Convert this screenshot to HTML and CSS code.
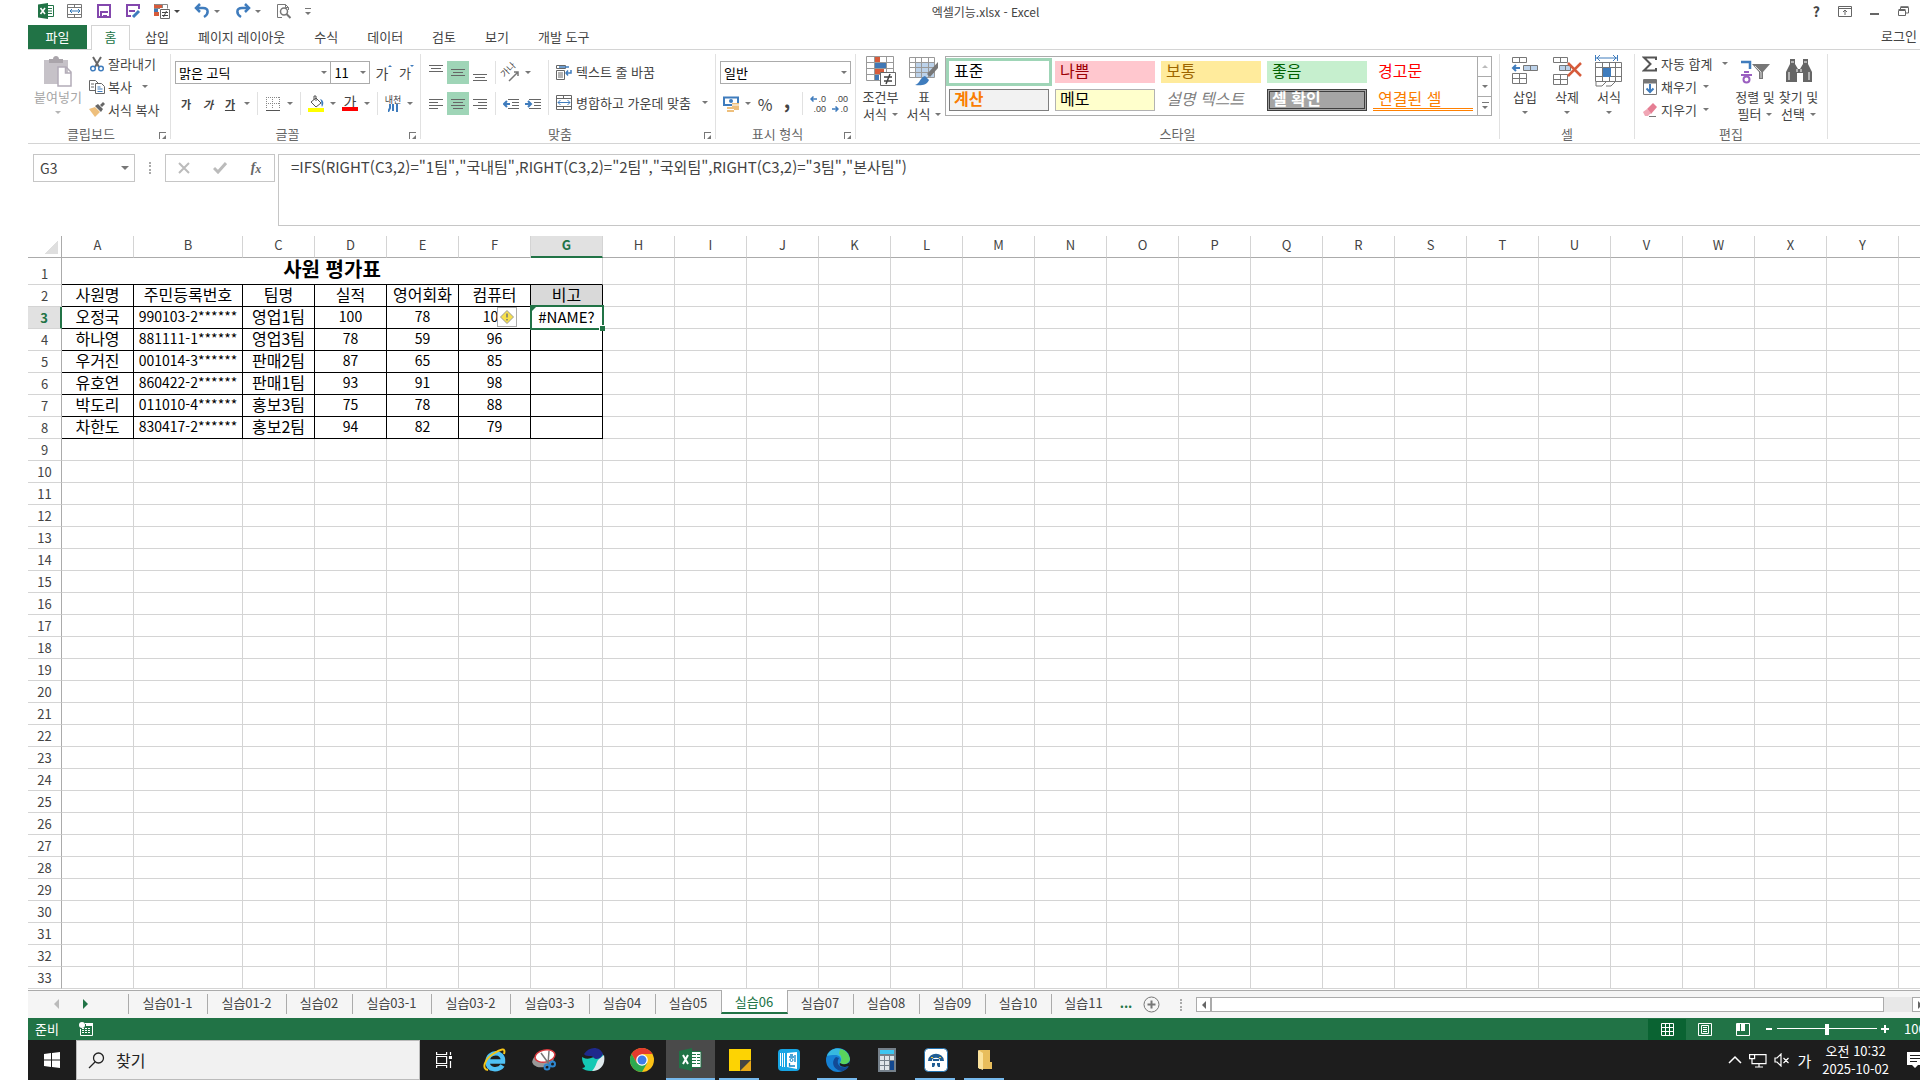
FILE: index.html
```html
<!doctype html>
<html lang="ko">
<head>
	<meta charset="utf-8">
	<meta name="viewport" content="width=device-width, initial-scale=1.0">
	<title>엑셀기능.xlsx - Excel</title>
	<link rel="stylesheet" href="styles.css">
</head>
<body>

<div class="app">

	<header class="titlebar">
		<div class="qat">
			<button class="q1" aria-label="Excel"><svg width="16" height="16" viewBox="0 0 16 16"><path fill="#fff" stroke="#217346" d="M8 2.500h7.500v11H8z"/><path stroke="#217346" d="M10 5.500h4M10 8h4M10 10.500h4"/><path fill="#217346" d="M0 1.500 10 0v16L0 14.500z"/><path stroke="#fff" stroke-width="1.600" d="m2.500 5 4.500 6M7 5l-4.500 6"/></svg></button>
			<button class="q1" aria-label="병합"><svg width="16" height="16" viewBox="0 0 16 16" fill="none" stroke="#777"><path d="M.500 1.500h14v13H.500zM.500 4.500h14M.500 11.500h14M7.500 1.500v3M7.500 11.500v3"/><path stroke="#2e75b6" d="M3 8h10M5 6 3 8l2 2M11 6l2 2-2 2"/></svg></button>
			<button class="q1" aria-label="저장"><svg width="16" height="16" viewBox="0 0 16 16" fill="none" stroke="#8347ad" stroke-width="2"><path d="M2 2h12v12H2z"/><path d="M4 9h8M5 14v-4M7 13h4"/></svg></button>
			<button class="q1" aria-label="다른 이름으로 저장"><svg width="16" height="16" viewBox="0 0 16 16" fill="none" stroke="#8347ad" stroke-width="2"><path d="M14 6V2H2v11h4M4 8h6"/><path stroke="#3f7cbd" stroke-width="3" d="m8 14 6-6"/></svg></button>
			<button class="q2" aria-label="조건부 서식"><svg width="16" height="16" viewBox="0 0 16 16"><path fill="#d65b3b" d="M0 1h8v4H0zM0 9h5v4H0z"/><path fill="#4178b5" d="M0 5h4v4H0z"/><path fill="none" stroke="#888" d="M.5 1.500h13v4M8.500 1v4M0 5.500h6"/><path fill="#fff" stroke="#666" d="M6.500 6.500h9v9h-9z"/><path stroke="#444" d="M8 9.500h6M8 12.500h6M12.500 8l-3 6"/></svg><i class="caret dark"></i></button>
			<button class="q3" aria-label="실행 취소"><svg width="16" height="16" viewBox="0 0 16 16" fill="none" stroke="#3f7cbd" stroke-width="2.500"><path d="M2 5h7c6 0 6 6 1 9"/><path d="M6 1 2 5l4 4"/></svg><i class="caret"></i></button>
			<button class="q3" aria-label="다시 실행"><svg width="16" height="16" viewBox="0 0 16 16" fill="none" stroke="#3f7cbd" stroke-width="2.500"><path d="M14 5H7c-6 0-6 6-1 9"/><path d="m10 1 4 4-4 4"/></svg><i class="caret"></i></button>
			<button class="q1" aria-label="미리 보기"><svg width="16" height="16" viewBox="0 0 16 16" fill="none" stroke="#777"><path d="M6 14.500H1.500V1.500h8l3 3V7M9.500 1.500v3h3"/><circle cx="8" cy="8.500" r="3.500" stroke-width="1.500"/><path stroke-width="2" d="m10.500 11 4 4"/></svg></button>
			<button class="more" aria-label="사용자 지정"><i class="caret"></i></button>
		</div>
		<h1>엑셀기능.xlsx - Excel</h1>
		<div class="winctl">
			<button class="help" aria-label="도움말">?</button>
			<button aria-label="리본 표시"><svg width="14" height="11" viewBox="0 0 14 11" fill="none" stroke="#666"><path d="M.5.500h13v10H.5zM.5 2.500h13M7 9V4M5 6l2-2 2 2"/></svg></button>
			<button aria-label="최소화"><svg width="10" height="11" viewBox="0 0 10 11"><path stroke="#666" stroke-width="2" d="M0 8h9"/></svg></button>
			<button aria-label="복원"><svg width="11" height="11" viewBox="0 0 11 11" fill="none" stroke="#666"><path d="M.5 4.500h7v5h-7zM.5 3.500h7M2.500 3V1.500h8V7H8M2.500.700h8"/></svg></button>
		</div>
	</header>

	<nav class="tabs">
		<a href="#" class="file">파일</a>
		<a href="#" class="on">홈</a>
		<a href="#">삽입</a>
		<a href="#">페이지 레이아웃</a>
		<a href="#">수식</a>
		<a href="#">데이터</a>
		<a href="#">검토</a>
		<a href="#">보기</a>
		<a href="#">개발 도구</a>
		<a href="#" class="login">로그인</a>
	</nav>

	<section class="ribbon">

		<div class="group g-clip">
			<div class="body">
				<button class="big off"><span class="pic"><svg width="30" height="32" viewBox="0 0 30 32"><path fill="#c6c2c8" d="M1 5h24v24H1z"/><path fill="#aaa5ab" d="M6 8V4h4c0-4 6-4 6 0h4v4z"/><path fill="#fff" stroke="#b3acb8" stroke-width="1.500" d="M15 12h8l5 5v14H15zM22.500 12v6H28"/></svg></span><span>붙여넣기</span><i class="caret"></i></button>
				<div class="stack">
					<button class="line"><svg width="16" height="16" viewBox="0 0 16 16" fill="none"><path stroke="#666" stroke-width="2" d="m4 1 6 10M12 1 6 11"/><circle cx="4" cy="12.500" r="2.300" stroke="#3f7cbd" stroke-width="1.500"/><circle cx="12" cy="12.500" r="2.300" stroke="#3f7cbd" stroke-width="1.500"/></svg>잘라내기</button>
					<button class="line"><svg width="16" height="16" viewBox="0 0 16 16" fill="#fff" stroke="#666"><path d="M.500 1.500h6l3 3v7h-9zM2 5h3M2 8h3"/><path d="M6.500 4.500h6l3 3v7h-9z"/><path stroke="#3f7cbd" d="M8.500 8h3M8.500 10h5M8.500 12.500h5"/></svg>복사<i class="caret far"></i></button>
					<button class="line"><svg width="16" height="16" viewBox="0 0 16 16"><path fill="#eebf7c" d="m0 7 6-2 5 5-5 5z"/><path fill="#666" d="m6 4 3-2 5 5-2 3zM11 3l3-3 2 2-3 3z"/></svg>서식 복사</button>
				</div>
			</div>
			<div class="cap dlg">클립보드<button class="launch" aria-label="클립보드 옵션"></button></div>
		</div>

		<div class="group g-font">
			<div class="body rows">
				<div class="row">
					<label class="drop font"><select aria-label="글꼴"><option>맑은 고딕</option></select><i class="caret"></i></label>
					<label class="drop size"><select aria-label="크기"><option>11</option></select><i class="caret"></i></label>
					<button class="ic ga up">가<i></i></button>
					<button class="ic ga small">가<i></i></button>
				</div>
				<div class="row">
					<button class="ic ga bold">가</button>
					<button class="ic ga bold it">가</button>
					<button class="ic ga bold un">가</button>
					<button class="cr" aria-label="밑줄"><i class="caret"></i></button>
					<span class="sep"></span>
					<button class="ic" aria-label="테두리"><svg width="14" height="14" viewBox="0 0 14 14" fill="none" stroke="#888"><path stroke-dasharray="1 1" d="M.500 0v12M6.500 0v12M13.500 0v12M0 .500h14M0 6.500h14"/><path stroke="#555" d="M0 13.500h14"/></svg></button>
					<button class="cr" aria-label="테두리 선택"><i class="caret"></i></button>
					<span class="sep"></span>
					<button class="ic" aria-label="채우기 색"><svg width="16" height="17" viewBox="0 0 16 17"><path fill="#fff" stroke="#555" d="m3 7 5-4 5 5-5 4zM6 5V1h2v5"/><path fill="#3f7cbd" d="M12 4c4 1 4 5 2 8-1-3 0-5-2-8z"/><path fill="#ff0" d="M0 13h16v4H0z"/></svg></button>
					<button class="cr" aria-label="채우기 색 선택"><i class="caret"></i></button>
					<button class="ic ga red">가</button>
					<button class="cr" aria-label="글꼴 색 선택"><i class="caret"></i></button>
					<span class="sep"></span>
					<button class="ic ruby"><span>내천</span><svg width="10" height="8" viewBox="0 0 10 8" fill="none" stroke="#3f7cbd" stroke-width="2"><path d="M2 0v4L0 8M5 0v7M9 0v8"/></svg></button>
					<button class="cr" aria-label="윗주"><i class="caret"></i></button>
				</div>
			</div>
			<div class="cap dlg">글꼴<button class="launch" aria-label="글꼴 옵션"></button></div>
		</div>

		<div class="group g-align">
			<div class="body">
				<div class="rows">
					<div class="row">
						<button class="ic" aria-label="위쪽 맞춤"><svg width="14" height="20" viewBox="0 0 14 20" stroke="#666"><path d="M0 2.500h14M2 5.500h10M0 8.500h14"/></svg></button>
						<button class="ic on" aria-label="가운데"><svg width="14" height="20" viewBox="0 0 14 20" stroke="#666"><path d="M0 6.500h14M2 9.500h10M0 12.500h14"/></svg></button>
						<button class="ic" aria-label="아래쪽 맞춤"><svg width="14" height="20" viewBox="0 0 14 20" stroke="#666"><path d="M0 11.500h14M2 14.500h10M0 17.500h14"/></svg></button>
						<span class="sep"></span>
						<button class="ic tilt"><span>가나</span><svg width="20" height="18" viewBox="0 0 20 18" fill="none" stroke="#777" stroke-width="1.500"><path d="m8 17 9-9M13 8h4v4"/></svg></button>
						<button class="cr" aria-label="방향"><i class="caret"></i></button>
					</div>
					<div class="row">
						<button class="ic" aria-label="왼쪽 맞춤"><svg width="14" height="12" viewBox="0 0 14 12" stroke="#666"><path d="M0 1.500h14M0 4.500h9M0 7.500h14M0 10.500h9"/></svg></button>
						<button class="ic on" aria-label="가운데 맞춤"><svg width="14" height="12" viewBox="0 0 14 12" stroke="#666"><path d="M0 1.500h14M2 4.500h10M0 7.500h14M2 10.500h10"/></svg></button>
						<button class="ic" aria-label="오른쪽 맞춤"><svg width="14" height="12" viewBox="0 0 14 12" stroke="#666"><path d="M0 1.500h14M5 4.500h9M0 7.500h14M5 10.500h9"/></svg></button>
						<span class="sep"></span>
						<button class="ic" aria-label="내어쓰기"><svg width="16" height="12" viewBox="0 0 16 12" fill="none" stroke="#666"><path d="M5 1.500h11M9 4.500h7M9 7.500h7M5 10.500h11"/><path stroke="#3f7cbd" stroke-width="2" d="M7 6H1M4 3 1 6l3 3"/></svg></button>
						<button class="ic" aria-label="들여쓰기"><svg width="16" height="12" viewBox="0 0 16 12" fill="none" stroke="#666"><path d="M4 1.500h12M9 4.500h7M9 7.500h7M4 10.500h12"/><path stroke="#3f7cbd" stroke-width="2" d="M0 6h6M3 3l3 3-3 3"/></svg></button>
					</div>
				</div>
				<span class="sep tall"></span>
				<div class="rows">
					<button class="line"><svg width="16" height="16" viewBox="0 0 16 16" fill="none" stroke="#666"><path d="M.500 1.500h9v3h-9zM.500 6.500h8v9h-8zM2 9h5M2 11h5M2 13h5"/><path stroke="#3f7cbd" stroke-width="1.500" d="M3 3h10M15 6v3h-5M12 6.500 10 9l2 2.500"/></svg>텍스트 줄 바꿈</button>
					<button class="line"><svg width="16" height="16" viewBox="0 0 16 16" fill="none" stroke="#666"><path d="M.500.500h15v14H.500zM.500 3.500h15M.500 11.500h15M7.500.500v3M7.500 11.500v3"/><path stroke="#3f7cbd" d="M2 7.500h12M4.500 5 2 7.500 4.500 10M11.500 5 14 7.500 11.500 10"/></svg>병합하고 가운데 맞춤<i class="caret far"></i></button>
				</div>
			</div>
			<div class="cap dlg">맞춤<button class="launch" aria-label="맞춤 옵션"></button></div>
		</div>

		<div class="group g-num">
			<div class="body rows">
				<div class="row">
					<label class="drop fmt"><select aria-label="표시 형식"><option>일반</option></select><i class="caret"></i></label>
				</div>
				<div class="row">
					<button class="ic" aria-label="회계 형식"><svg width="16" height="16" viewBox="0 0 16 16"><path fill="#fff" stroke="#3f7cbd" stroke-width="2" d="M1 1.500h14V9H1z"/><circle cx="8" cy="5" r="2" fill="#3f7cbd"/><path fill="#eebf7c" d="M9 7h7v4H9zM4 11h7v5H4zM11 11h5v3h-5z"/><path stroke="#fff" d="M9 9h7M4 13.500h7"/></svg></button>
					<button class="cr" aria-label="회계 형식 선택"><i class="caret"></i></button>
					<button class="ic pct">%</button>
					<button class="ic comma">,</button>
					<span class="sep"></span>
					<button class="ic dec"><span><svg width="7" height="6" viewBox="0 0 7 6" fill="none" stroke="#3f7cbd" stroke-width="1.500"><path d="M7 3H1M3.500.500 1 3l2.500 2.500"/></svg>.0</span><span>.00</span></button>
					<button class="ic dec"><span>.00</span><span><svg width="7" height="6" viewBox="0 0 7 6" fill="none" stroke="#3f7cbd" stroke-width="1.500"><path d="M0 3h6M3.500.500 6 3 3.500 5.500"/></svg>.0</span></button>
				</div>
			</div>
			<div class="cap dlg">표시 형식<button class="launch" aria-label="표시 형식 옵션"></button></div>
		</div>

		<div class="group g-style">
			<div class="body">
				<button class="big"><span class="pic"><svg width="30" height="32" viewBox="0 0 30 32"><path fill="#fff" stroke="#999" d="M.500 1.500h27v24H.500zM.500 7.500h27M.500 13.500h27M.500 19.500h27M8.500 1v24M20.500 1v24"/><path fill="#d65b3b" d="M9 2h5v5H9zM9 14h9v5H9z"/><path fill="#4178b5" d="M9 8h11v5H9zM9 20h4v5H9z"/><path fill="#fff" stroke="#666" d="M14.500 17.500h15v13h-15z"/><path stroke="#444" stroke-width="1.500" d="M18 22h8M18 26h8M24 19l-4 10"/></svg></span><span>조건부</span><span>서식<i class="caret"></i></span></button>
				<button class="big narrow"><span class="pic"><svg width="30" height="30" viewBox="0 0 30 30"><path fill="#bcd2ea" d="M7 7h19v14H7z"/><path fill="none" stroke="#999" d="M.500 1.500h25v20H.500zM.500 6.500h25M.500 11.500h25M.500 16.500h25M6.500 1v20M12.500 1v20M19.500 1v20"/><path fill="#777" d="M29 6v6l-8 9-3-3z"/><path fill="#3f7cbd" d="M6 29c5-1 5-8 10-9l4 4c-2 5-8 6-14 5z"/></svg></span><span>표</span><span>서식<i class="caret"></i></span></button>
				<div class="gallery">
					<div class="swatches">
						<button class="sw picked">표준</button>
						<button class="sw bad">나쁨</button>
						<button class="sw neutral">보통</button>
						<button class="sw good">좋음</button>
						<button class="sw warn">경고문</button>
						<button class="sw calc">계산</button>
						<button class="sw memo">메모</button>
						<button class="sw desc">설명 텍스트</button>
						<button class="sw check">셀 확인</button>
						<button class="sw linked">연결된 셀</button>
					</div>
					<div class="spin">
						<button aria-label="위로"><i class="caret upward"></i></button>
						<button aria-label="아래로"><i class="caret"></i></button>
						<button class="all" aria-label="모두"><i class="caret"></i></button>
					</div>
				</div>
			</div>
			<div class="cap">스타일</div>
		</div>

		<div class="group g-cell">
			<div class="body">
				<button class="big narrow"><span class="pic"><svg width="28" height="30" viewBox="0 0 28 30" fill="none" stroke="#777"><path d="M1.500 1.500h14v5h-14zM8.500 1v5M1.500 17.500h14v10h-14zM1.500 22.500h14M8.500 17v10"/><path fill="#bcd2ea" d="M12.500 9.500h14v5h-14zM19.500 9v5"/><path stroke="#3f7cbd" stroke-width="2" d="M9 12H2M5 9l-3 3 3 3"/></svg></span><span>삽입</span><i class="caret"></i></button>
				<button class="big narrow"><span class="pic"><svg width="30" height="30" viewBox="0 0 30 30" fill="none" stroke="#777"><path d="M1.500 1.500h14v5h-14zM8.500 1v5M1.500 18.500h14v10h-14zM1.500 23.500h14M8.500 18v10"/><path fill="#bcd2ea" d="M7.500 9.500h11v5h-11zM13.500 9v5"/><path stroke="#d65b3b" stroke-width="2.500" d="m16 7 13 13M29 7 16 20"/></svg></span><span>삭제</span><i class="caret"></i></button>
				<button class="big narrow"><span class="pic"><svg width="30" height="32" viewBox="0 0 30 32" fill="none" stroke="#777"><path d="M1.500 7.500h26v19h-26zM1.500 12.500h26M1.500 21.500h26M8.500 7v19M15.500 7v19M21.500 7v19M2 27v4h6l4-4M12 31h5l4-4"/><path fill="#3f7cbd" stroke="none" d="M9 13h8v9H9z"/><path stroke="#3f7cbd" d="M1.500 0v6M23.500 0v6M2 3h21M6 0 3 3l3 3M19 0l3 3-3 3"/></svg></span><span>서식</span><i class="caret"></i></button>
			</div>
			<div class="cap">셀</div>
		</div>

		<div class="group g-edit">
			<div class="body">
				<div class="stack">
					<button class="line"><svg width="16" height="16" viewBox="0 0 16 16" fill="none" stroke="#555" stroke-width="2"><path d="M14 4V1.500H2L8.500 8 2 14.500h12V12"/></svg>자동 합계<i class="caret far"></i></button>
					<button class="line"><svg width="16" height="16" viewBox="0 0 16 16" fill="none" stroke="#777"><path d="M1.500.500h13v15h-13z"/><path fill="#777" d="M2 1h12v3H2z"/><path stroke="#3f7cbd" stroke-width="2" d="M8 5v8M4.500 9.500 8 13l3.500-3.500"/></svg>채우기<i class="caret"></i></button>
					<button class="line"><svg width="16" height="16" viewBox="0 0 16 16"><path fill="#e57e93" d="m5 7 6-6 4 4-6 7z"/><path fill="#f0a6b5" d="m1 10 4-3 4 4-3 3H3z"/><path stroke="#777" d="M7 14.500h7"/></svg>지우기<i class="caret"></i></button>
				</div>
				<button class="big narrow"><span class="pic"><svg width="30" height="28" viewBox="0 0 30 28" fill="none"><path stroke="#3f7cbd" stroke-width="2.500" d="M1 5h9v7"/><path stroke="#9a5fc0" stroke-width="2" d="M4 15h5M1 18h11"/><circle cx="6.500" cy="22.500" r="3" stroke="#9a5fc0" stroke-width="2"/><path fill="#777" d="M12 7h18l-7 8v7h-4v-7z"/><path stroke="#ddd" d="m15 9 6 6v6"/></svg></span><span>정렬 및</span><span>필터<i class="caret"></i></span></button>
				<button class="big"><span class="pic"><svg width="28" height="28" viewBox="0 0 28 28"><path fill="#666" d="M5 2h5v5l3 5h2l3-5V2h5v5l4 8v10h-9v-9h-6v9H1V15l4-8z"/><path stroke="#fff" d="M4 15v8M24 15v8M12 12v3M16 12v3M6 5h3M19 5h3"/></svg></span><span>찾기 및</span><span>선택<i class="caret"></i></span></button>
			</div>
			<div class="cap">편집</div>
		</div>

	</section>

	<section class="fbar">
		<label class="namebox"><input type="text" value="G3" aria-label="이름 상자"><i class="caret"></i></label>
		<span class="dots"></span>
		<div class="fbtns">
			<button aria-label="취소"><svg width="12" height="12" viewBox="0 0 12 12" stroke="#bbb" stroke-width="2"><path d="m1 1 10 10M11 1 1 11"/></svg></button>
			<button aria-label="입력"><svg width="14" height="12" viewBox="0 0 14 12" fill="none" stroke="#bbb" stroke-width="3"><path d="m1 6 4 4 8-9"/></svg></button>
			<button class="fx">f<small>x</small></button>
		</div>
		<textarea class="formula" aria-label="수식 입력줄">=IFS(RIGHT(C3,2)="1팀","국내팀",RIGHT(C3,2)="2팀","국외팀",RIGHT(C3,2)="3팀","본사팀")</textarea>
	</section>

	<main class="sheet">
		<table id="grid"></table>
	</main>

	<nav class="sheets">
		<div class="arrows"><button class="prev" aria-label="이전"></button><button class="next" aria-label="다음"></button></div>
		<a href="#" class="wide">실습01-1</a>
		<a href="#" class="wide">실습01-2</a>
		<a href="#">실습02</a>
		<a href="#" class="wide">실습03-1</a>
		<a href="#" class="wide">실습03-2</a>
		<a href="#" class="wide">실습03-3</a>
		<a href="#">실습04</a>
		<a href="#">실습05</a>
		<a href="#" class="on">실습06</a>
		<a href="#">실습07</a>
		<a href="#">실습08</a>
		<a href="#">실습09</a>
		<a href="#">실습10</a>
		<a href="#" class="last">실습11</a>
		<button class="dotdot">...</button>
		<button class="add" aria-label="새 시트"><svg width="17" height="17" viewBox="0 0 17 17" fill="none" stroke="#777"><circle cx="8.500" cy="8.500" r="7.500"/><path stroke-width="2" d="M4.500 8.500h8M8.500 4.500v8"/></svg></button>
		<span class="dots"></span>
		<div class="hscroll">
			<button class="prev" aria-label="왼쪽으로"></button>
			<div class="thumb"></div>
			<button class="next" aria-label="오른쪽으로"></button>
		</div>
	</nav>

	<footer class="status">
		<span>준비</span>
		<svg class="macro" width="14" height="14" viewBox="0 0 14 14"><path fill="none" stroke="#fff" d="M6 1.500h7.500v12h-12V7"/><path fill="#fff" d="M7 1h7v3H7z"/><path stroke="#fff" stroke-dasharray="2 1" d="M3 6.500h9M3 8.500h9M3 10.500h9"/><circle cx="3" cy="3" r="3" fill="#fff"/></svg>
		<div class="views">
			<button class="on" aria-label="기본"><svg width="13" height="13" viewBox="0 0 13 13" fill="none" stroke="#fff"><path d="M.500.500h12v12H.500zM.500 4.500h12M.500 8.500h12M4.500.500v12M8.500.500v12"/></svg></button>
			<button aria-label="페이지 레이아웃"><svg width="14" height="13" viewBox="0 0 14 13" fill="none" stroke="#fff"><path d="M.500.500h13v12H.500zM3.500 2.500h7v8h-7zM5 4.500h4M5 6.500h4M5 8.500h4"/></svg></button>
			<button aria-label="페이지 나누기"><svg width="14" height="13" viewBox="0 0 14 13"><path fill="none" stroke="#fff" d="M.500.500h13v12H.500z"/><path fill="#fff" d="M1 1h3v7H1zM5 1h4v7H5z"/></svg></button>
		</div>
		<button class="zm" aria-label="축소"><svg width="8" height="8" viewBox="0 0 8 8"><path stroke="#fff" stroke-width="2" d="M1 4h6"/></svg></button>
		<input type="range" min="10" max="190" value="100" aria-label="확대/축소">
		<button class="zm" aria-label="확대"><svg width="8" height="8" viewBox="0 0 8 8"><path stroke="#fff" stroke-width="2" d="M0 4h8M4 0v8"/></svg></button>
		<span class="pctv">100%</span>
	</footer>

	<footer class="taskbar">
		<button class="start" aria-label="시작"><svg width="16" height="16" viewBox="0 0 16 16" fill="#fff"><path d="m0 2 7-1v6.500H0zM8 1l8-1v7.500H8zM0 8.500h7V15l-7-1zM8 8.500h8V16l-8-1z"/></svg></button>
		<label class="find"><svg width="17" height="17" viewBox="0 0 17 17" fill="none" stroke="#222" stroke-width="1.300"><circle cx="10.500" cy="6" r="5"/><path d="m7 10-6 6"/></svg><input type="text" placeholder="찾기" aria-label="찾기"></label>
		<button class="view" aria-label="작업 보기"><svg width="16" height="16" viewBox="0 0 16 16" fill="none" stroke="#fff" stroke-width="1.200"><path d="M.600 0v2.500h10V0M.600 4.500h10v7h-10zM.600 16v-2.500h10V16M14.500 0v3M14.500 9v7"/><path fill="#fff" d="M13.500 4.500h2v2h-2z"/></svg></button>
		<button aria-label="Internet Explorer"><svg width="24" height="24" viewBox="0 0 24 24" fill="none"><path stroke="#4fc0f4" stroke-width="4.500" d="M5 13.500h15c1-11-15-11-15.500 0 0 10 12 9 15 4"/><path stroke="#f5c518" stroke-width="2" d="M5 22c-7-1-3-11 5-16S23-1 21 6"/></svg></button>
		<button aria-label="캡처 도구"><svg width="24" height="24" viewBox="0 0 24 24"><ellipse cx="11" cy="12" rx="11" ry="7" fill="#999" transform="rotate(-15 11 12)"/><ellipse cx="13" cy="8" rx="10" ry="6" fill="#fff" stroke="#d9393e" stroke-width="1.500" transform="rotate(-12 13 8)"/><path stroke="#777" stroke-width="1.500" d="m9 5 8 11M17 3l-1 13"/><g fill="none" stroke="#2e86cf" stroke-width="2"><circle cx="15" cy="19" r="2.500"/><circle cx="20.500" cy="16" r="2.500"/></g></svg></button>
		<button aria-label="Whale"><svg width="24" height="24" viewBox="0 0 24 24"><path fill="#14c8b4" d="M1 9c0 0 4 3 9 1l12-4c2 12-5 17-12 17-4 0-7-1-9-3 2 0 3-1 3-2-2-2-3-5-3-9z"/><path fill="#dfe9ec" d="M23 7c2 10-4 16-12 16 4-4 4-8 6-11 2-2 4-3 6-5z"/><path fill="#1f2a8c" d="M3 6C8-2 19-2 22 6c-1 3-4 5-7 5-2 0-3-3-5-3-3 0-6 0-7-2z"/></svg></button>
		<button aria-label="Chrome"><svg width="24" height="24" viewBox="0 0 24 24"><circle cx="12" cy="12" r="12" fill="#fbc116"/><path fill="#e33b2e" d="M1.600 6A12 12 0 0 1 22.400 6H12l-5.200 9z"/><path fill="#2da94f" d="M1.600 6A12 12 0 0 0 12 24l5.200-9H6.800z"/><circle cx="12" cy="12" r="5.800" fill="#fff"/><circle cx="12" cy="12" r="4.500" fill="#3e7de8"/></svg></button>
		<button class="run now" aria-label="Excel"><svg width="24" height="24" viewBox="0 0 24 24"><path fill="#fff" stroke="#217346" d="M11 3.500h11v16H11z"/><path stroke="#217346" stroke-dasharray="4 1" d="M13 6.500h8M13 9.500h8M13 12.500h8M13 15.500h8"/><path fill="#217346" d="M0 3 13 0v23L0 20z"/><path stroke="#fff" stroke-width="2" d="m4 7 5 9M9 7l-5 9"/></svg></button>
		<button class="run" aria-label="스티커 메모"><svg width="22" height="22" viewBox="0 0 22 22"><path fill="#fdd303" d="M0 0h22v12L12 22H0z"/><path fill="#e8a91a" d="M22 11v11H11z"/><path fill="#444" d="M11 11h11L11 22z"/></svg></button>
		<button aria-label="한컴 사전"><svg width="22" height="22" viewBox="0 0 22 22" fill="none"><rect width="22" height="22" rx="4" fill="#17a5e4"/><path fill="#fff" d="m9 4 10-1v17l-10-2z"/><path stroke="#fff" d="M2.500 4v13M4.500 4v14M6.500 4v14"/><path stroke="#1287c8" stroke-width="1.300" d="M12 6h3M11 8h5M17 6v7M11.500 14v3H17"/><circle cx="13.500" cy="11" r="1.500" stroke="#1287c8"/></svg></button>
		<button class="run" aria-label="Edge"><svg width="24" height="24" viewBox="0 0 24 24"><circle cx="12" cy="12" r="12" fill="#1681d4"/><path fill="#37b9e0" d="M1 8C4-2 20-2 23 9c2 8-6 8-9 6 2-3 1-8-5-8-3 0-6 0-8 1z"/><path fill="#5ad35c" d="M14 1c6 1 9 5 10 10-1 6-8 6-10 4 3-4 1-8-1-9z"/><path fill="#124a96" d="M10 9c-6 5-2 14 7 14 3-1 5-3 6-5-8 4-14-2-10-8z"/><path fill="#1d1d1d" d="M24 13c-2 4-7 4-10 2-1 1 0 4 5 4l4-1z"/></svg></button>
		<button aria-label="계산기"><svg width="18" height="24" viewBox="0 0 18 24"><path fill="#75808a" d="M0 0h18v24H0z"/><path fill="#3dc5f0" d="M2 2h14v4H2z"/><path fill="#dfe5ea" d="M2 8h4v4H2zM7 8h4v4H7zM12 8h4v4h-4zM2 13h4v4H2zM7 13h4v4H7zM2 18h4v4H2zM7 18h4v4H7z"/><path fill="#13488f" d="M12 13h4v9h-4z"/></svg></button>
		<button class="run" aria-label="관리 도구"><svg width="24" height="24" viewBox="0 0 24 24"><rect x=".5" y=".5" width="23" height="23" rx="4" fill="#fff" stroke="#2271ae"/><path fill="none" stroke="#1f5c93" stroke-width="4" d="M6 13c0-7 12-7 12 0"/><path fill="#f0c53a" d="M7 9h2v1H7zM15 9h2v1h-2z"/><path fill="#1f5c93" d="M9 11h6v2H9zM8 15h3v2l-1 2H8zM13 15h3v4h-2l-1-2z"/></svg></button>
		<button class="run" aria-label="탐색기"><svg width="16" height="22" viewBox="0 0 16 22"><path fill="#e8bd5c" d="M2 1h11v12h2v7H2z"/><path fill="#fbe29c" d="m1 1 5 3v17l-5-2z"/></svg></button>
		<div class="tray">
			<svg width="14" height="10" viewBox="0 0 14 10" fill="none" stroke="#fff" stroke-width="1.500"><path d="m1 8 6-6 6 6"/></svg>
			<svg width="18" height="15" viewBox="0 0 18 15" fill="none" stroke="#fff" stroke-width="1.200"><path d="M5 1.600h12v9H3V6M.600 1.600h5v4h-5zM10 11v3M6 14h8"/></svg>
			<svg width="16" height="14" viewBox="0 0 16 14" fill="none" stroke="#fff" stroke-width="1.200"><path d="M1 5h2l4-4v12L3 9H1zM9.500 5l5 5M14.500 5l-5 5"/></svg>
			<span class="ime">가</span>
			<div class="clock"><span>오전 10:32</span><span>2025-10-02</span></div>
			<svg width="16" height="16" viewBox="0 0 16 16"><path fill="#fff" d="M0 0h16v13h-5l-3 3-3-3H0z"/><path stroke="#1d1d1d" d="M3 3.500h10M3 6.500h10M3 9.500h7"/></svg>
		</div>
	</footer>

</div>

<script>
	var cols = "ABCDEFGHIJKLMNOPQRSTUVWXYZ".split("");
	var lastRow = 33;
	var data = [
		["사원명", "주민등록번호", "팀명", "실적", "영어회화", "컴퓨터", "비고"],
		["오정국", "990103-2******", "영업1팀", "100", "78", "100", "#NAME?"],
		["하나영", "881111-1******", "영업3팀", "78", "59", "96", ""],
		["우거진", "001014-3******", "판매2팀", "87", "65", "85", ""],
		["유호연", "860422-2******", "판매1팀", "93", "91", "98", ""],
		["박도리", "011010-4******", "홍보3팀", "75", "78", "88", ""],
		["차한도", "830417-2******", "홍보2팀", "94", "82", "79", ""]
	];

	var html = '<tr class="head"><th class="corner"></th>';
	cols.forEach(function(c){
		html += '<th class="col' + (c == "B" ? " b" : "") + (c == "G" ? " on" : "") + '">' + c + '</th>';
	});
	html += '</tr>';

	for (var r = 1; r <= lastRow; r++) {
		html += '<tr' + (r == 1 ? ' class="first"' : '') + '><th class="num' + (r == 3 ? " on" : "") + '">' + r + '</th>';
		var start = 0;
		if (r == 1) {
			html += '<td colspan="7" class="title">사원 평가표</td>';
			start = 7;
		}
		for (var i = start; i < cols.length; i++) {
			var row = data[r - 2];
			if (!row || i > 6) {
				html += '<td></td>';
				continue;
			}
			var cls = "box";
			if (i == 6 && r == 2) cls += " gray";
			if (/^[0-9]/.test(row[i])) cls += " n";
			if (i == 6 && r == 3) {
				html += '<td class="box cur">' + row[i] + '<span class="sel"></span><span class="tag"><svg width="14" height="14" viewBox="0 0 14 14"><path fill="#f7e04b" stroke="#999" d="m7 .500 6.500 6.500L7 13.500.500 7z"/><path stroke="#777" stroke-width="1.500" d="M7 3.500v4M7 9v1.500"/></svg></span></td>';
			} else {
				html += '<td class="' + cls + '">' + row[i] + '</td>';
			}
		}
		html += '</tr>';
	}
	document.getElementById("grid").innerHTML = html;
</script>

</body>
</html>
```
FILE: styles.css
```css
* {
	box-sizing: border-box;
}
body {
	margin: 0;
	background: #fff;
	font-family: "Noto Sans CJK KR", sans-serif;
	font-size: 13px;
	color: #444;
	overflow: hidden;
}
button, input, select, textarea {
	font: inherit;
	color: inherit;
	background: transparent;
	border: 0;
	padding: 0;
	margin: 0;
	outline: 0;
	border-radius: 0;
}
button {
	display: flex;
	align-items: center;
	justify-content: center;
	white-space: nowrap;
}
a {
	color: inherit;
	text-decoration: none;
	white-space: nowrap;
}
svg {
	display: block;
	flex: none;
}
/* the window runs a little past the right edge of the screen */
.app {
	margin-left: 28px;
	margin-right: -16px;
	height: 100vh;
	display: flex;
	flex-direction: column;
}
.app > * {
	flex: none;
}
.caret {
	display: inline-block;
	flex: none;
	width: 0;
	height: 0;
	border: 3px solid transparent;
	border-top-color: #777;
	border-bottom: 0;
}
.caret.dark {
	border-top-color: #444;
}

/* title bar */
.titlebar {
	height: 25px;
	display: flex;
	align-items: center;
	padding: 0 27px 3px 10px;
}
.qat {
	display: flex;
	flex: 1 1 0;
}
.qat button {
	justify-content: flex-start;
	height: 20px;
}
.q1 {
	width: 29px;
}
.qat .q2, .qat .q3 {
	gap: 4px;
	width: 40px;
}
.qat .q3 {
	width: 41px;
}
.more .caret {
	margin-top: 5px;
	position: relative;
}
.more .caret:before {
	content: "";
	position: absolute;
	left: -3px;
	top: -7px;
	width: 6px;
	height: 1px;
	background: #777;
}
h1 {
	margin: 0 0 0 24px;
	font-size: 12px;
	font-weight: normal;
}
.winctl {
	flex: 1 1 0;
	display: flex;
	justify-content: flex-end;
	gap: 18px;
}
.help {
	font-weight: bold;
	font-size: 14px;
	line-height: 16px;
}

/* tabs */
.tabs {
	display: flex;
	height: 25px;
	border-bottom: 1px solid #d4d4d4;
}
.tabs a {
	padding: 0 14px 0 15px;
	line-height: 24px;
}
.tabs .file {
	width: 59px;
	margin-right: 4px;
	background: #217346;
	color: #fff;
	text-align: center;
	padding: 0;
}
.tabs .on {
	width: 39px;
	height: 25px;
	padding: 0;
	text-align: center;
	color: #217346;
	background: #fff;
	border: 1px solid #d4d4d4;
	border-bottom: 0;
	line-height: 22px;
}
.tabs .login {
	margin-left: auto;
	padding: 0 19px 0 0;
	line-height: 22px;
}

/* ribbon */
.ribbon {
	display: flex;
	padding: 4px 0;
	border-bottom: 1px solid #d4d4d4;
}
.group {
	flex: none;
	height: 85px;
	border-right: 1px solid #e1e1e1;
}
.g-clip { width: 143px; }
.g-font { width: 250px; }
.g-align { width: 295px; }
.g-num { width: 140px; }
.g-style { width: 644px; }
.g-cell { width: 135px; }
.g-edit { width: 193px; }
.body {
	display: flex;
	height: 72px;
	padding: 0 4px;
}
.g-clip .body, .g-style .body {
	padding: 0 0 0 2px;
}
.rows {
	display: flex;
	flex-direction: column;
	gap: 8px;
	padding-top: 7px;
}
.body.rows {
	padding-top: 7px;
}
.row {
	display: flex;
	height: 23px;
}
.cap {
	position: relative;
	text-align: center;
	line-height: 15px;
	color: #666;
}
.dlg {
	padding-right: 16px;
}
.launch {
	position: absolute;
	right: 4px;
	top: 6px;
	width: 7px;
	height: 7px;
	border-left: 1px solid #777;
	border-top: 1px solid #777;
}
.launch:after {
	content: "";
	position: absolute;
	right: 0;
	bottom: 0;
	border: 2px solid #777;
	border-left-color: transparent;
	border-top-color: transparent;
}
.big {
	flex-direction: column;
	justify-content: flex-start;
	width: 45px;
	line-height: 17px;
}
.big.narrow {
	width: 42px;
}
.g-clip .big {
	width: 56px;
}
.big .pic {
	height: 34px;
	display: flex;
	align-items: center;
}
.big > .caret {
	margin-top: 6px;
}
.big span .caret {
	margin: 0 0 3px 5px;
}
.off {
	color: #a6a6a6;
}
.off .caret {
	border-top-color: #b5b5b5;
}
.line {
	justify-content: flex-start;
	gap: 3px;
	padding-left: 3px;
	height: 23px;
}
.stack {
	margin-top: -2px;
}
.rows .line {
	gap: 4px;
	padding-bottom: 2px;
}
.line .caret {
	margin-left: 3px;
}
.line .far {
	margin-left: 7px;
}
.g-edit .stack {
	width: 95px;
}
.ic {
	width: 22px;
	height: 23px;
	flex: none;
}
.ic.on {
	background: #9fd5b7;
}
.cr {
	width: 12px;
}
.sep {
	width: 1px;
	margin: 0 4px;
	background: #e1e1e1;
}
.sep.tall {
	height: 55px;
	margin-top: 6px;
}
.drop {
	display: flex;
	align-items: center;
	border: 1px solid #ababab;
	height: 23px;
	padding-right: 3px;
	color: #000;
}
.drop select {
	appearance: none;
	flex: 1;
	min-width: 0;
	padding-left: 3px;
	line-height: 20px;
}
.font {
	width: 158px;
}
.size {
	width: 40px;
	margin-left: -1px;
}
.fmt {
	width: 131px;
}
.ga {
	position: relative;
}
.ga.up {
	width: 24px;
	font-size: 14px;
}
.ga.small i, .ga.up i {
	position: absolute;
	right: 2px;
	top: 4px;
	border: 2px solid transparent;
	border-bottom-color: #3f7cbd;
	border-top: 0;
}
.ga.small i {
	border-top: 2px solid #3f7cbd;
	border-bottom: 0;
}
.ga.bold {
	font-weight: bold;
	font-size: 11px;
}
.it {
	font-style: italic;
}
.un {
	text-decoration: underline;
}
.red {
	font-size: 14px;
	line-height: 16px;
	padding-bottom: 5px;
}
.red:after {
	content: "";
	position: absolute;
	left: 3px;
	bottom: 4px;
	width: 16px;
	height: 4px;
	background: #f00;
}
.ruby {
	flex-direction: column;
	font-size: 9px;
	line-height: 9px;
}
.tilt {
	position: relative;
}
.tilt span {
	position: absolute;
	left: 0;
	top: 4px;
	font-size: 9px;
	line-height: 10px;
	transform: rotate(-45deg);
}
.pct {
	font-size: 16px;
}
.comma {
	font-size: 20px;
	font-weight: bold;
	line-height: 10px;
	padding-bottom: 8px;
}
.dec {
	flex-direction: column;
	align-items: flex-end;
	padding-right: 3px;
	font-family: "Liberation Sans", sans-serif;
	font-size: 9px;
	line-height: 10px;
}
.dec span {
	display: flex;
	align-items: center;
	gap: 1px;
}

/* style gallery */
.gallery {
	display: flex;
	width: 547px;
	height: 60px;
	margin-top: 2px;
	border: 1px solid #ababab;
}
.swatches {
	display: grid;
	grid-template-columns: repeat(5, 100px);
	grid-auto-rows: 22px;
	gap: 6px;
	padding: 4px 3px;
	flex: 1;
}
.sw {
	justify-content: flex-start;
	padding: 0 0 4px 5px;
	font-size: 16px;
	line-height: 18px;
	color: #000;
}
.picked {
	box-shadow: 0 0 0 3px #9fd5b7;
}
.bad { background: #ffc7ce; color: #9c0006; }
.neutral { background: #ffeb9c; color: #9c6500; }
.good { background: #c6efce; color: #006100; }
.warn { color: #f00; }
.calc {
	background: #f2f2f2;
	border: 1px solid #7f7f7f;
	color: #fa7d00;
	font-weight: bold;
	padding-left: 4px;
}
.memo {
	background: #ffffcc;
	border: 1px solid #b2b2b2;
	padding-left: 4px;
}
.desc {
	color: #7f7f7f;
	font-style: italic;
}
.check {
	background: #a5a5a5;
	border: 3px double #3f3f3f;
	color: #fff;
	font-weight: bold;
	line-height: 14px;
	padding-left: 2px;
}
.linked {
	color: #fa7d00;
	border-bottom: 3px double #ff8001;
	padding-bottom: 2px;
}
.spin {
	width: 14px;
	border-left: 1px solid #ababab;
}
.spin button {
	width: 100%;
	height: 20px;
	border-bottom: 1px solid #ababab;
}
.spin button:last-child {
	height: 18px;
	border: 0;
}
.spin .upward {
	transform: rotate(180deg);
	border-top-color: #bbb;
}
.spin .all .caret {
	margin-top: 3px;
	position: relative;
}
.spin .all .caret:before {
	content: "";
	position: absolute;
	left: -3px;
	top: -7px;
	width: 7px;
	height: 1px;
	background: #777;
}

/* formula bar */
.fbar {
	display: flex;
	align-items: flex-start;
	padding: 10px 0 10px 5px;
}
.namebox {
	width: 102px;
	height: 28px;
	display: flex;
	align-items: center;
	border: 1px solid #c6c6c6;
	padding: 0 5px 0 6px;
}
.namebox input {
	flex: 1;
	min-width: 0;
	font-size: 14px;
}
.namebox .caret {
	border-width: 4px 4px 0;
}
.dots {
	width: 2px;
	height: 12px;
	margin: 8px 14px 0;
	border-left: 2px dotted #aaa;
}
.fbtns {
	display: flex;
	width: 110px;
	height: 28px;
	border: 1px solid #c6c6c6;
	margin-right: 3px;
}
.fbtns button {
	flex: 1;
}
.fx {
	font-family: "Liberation Serif", serif;
	font-style: italic;
	font-weight: bold;
	font-size: 14px;
	color: #666;
}
.fx small {
	font-size: 12px;
	padding-top: 3px;
}
.formula {
	flex: 1;
	height: 72px;
	border: 1px solid #c6c6c6;
	padding: 2px 12px;
	font-size: 15px;
	line-height: 20px;
	resize: none;
	overflow: hidden;
}

/* grid */
.app .sheet {
	flex: 1;
	min-height: 0;
	overflow: hidden;
	border-bottom: 1px solid #ababab;
}
#grid {
	table-layout: fixed;
	width: 1943px;
	border-spacing: 0;
}
#grid th, #grid td {
	padding: 0 0 2px;
	height: 22px;
	line-height: 19px;
	text-align: center;
	font-weight: normal;
	white-space: nowrap;
	border-right: 1px solid #d4d4d4;
	border-bottom: 1px solid #d4d4d4;
}
#grid .corner {
	width: 34px;
	border-right-color: #ababab;
	background: linear-gradient(135deg, #fff 50%, #dfdfdf 50%) 16px 4px / 14px 14px no-repeat;
}
#grid .head th {
	border-bottom-color: #ababab;
	line-height: 17px;
	padding-bottom: 4px;
}
#grid .col {
	width: 72px;
}
#grid .b {
	width: 109px;
}
#grid .num {
	border-right-color: #ababab;
	padding: 0;
}
#grid .on {
	background: #e1e1e1;
	color: #217346;
	font-weight: bold;
}
#grid .head .on {
	border-bottom: 2px solid #217346;
	padding-bottom: 3px;
}
#grid .num.on {
	border-right: 2px solid #217346;
}
#grid .first th, #grid .first td {
	height: 27px;
}
#grid .first th {
	padding-top: 5px;
}
#grid .title {
	font-size: 20px;
	font-weight: bold;
	color: #000;
	border-bottom-color: #000;
	padding-bottom: 6px;
}
#grid .box {
	font-size: 16px;
	color: #000;
	border-color: #000;
}
#grid .n {
	font-size: 14px;
}
#grid .gray {
	background: #d9d9d9;
}
#grid .cur {
	position: relative;
	font-size: 15px;
}
.sel {
	position: absolute;
	left: -1px;
	top: -2px;
	right: -2px;
	bottom: -2px;
	border: 2px solid #217346;
}
.sel:before {
	content: "";
	position: absolute;
	left: 0;
	top: 0;
	border: 2px solid #217346;
	border-right-color: transparent;
	border-bottom-color: transparent;
}
.sel:after {
	content: "";
	position: absolute;
	right: -3px;
	bottom: -3px;
	width: 5px;
	height: 5px;
	background: #217346;
	border-left: 1px solid #fff;
	border-top: 1px solid #fff;
	box-sizing: content-box;
}
.tag {
	position: absolute;
	left: -34px;
	top: 0;
	width: 20px;
	height: 20px;
	border: 1px solid #ababab;
	background: #fff;
	display: flex;
	align-items: center;
	justify-content: center;
}

/* sheet tabs */
.sheets {
	display: flex;
	height: 27px;
	background: #f5f5f5;
}
.sheets a {
	width: 66px;
	height: 20px;
	margin-top: 3px;
	padding-right: 1px;
	line-height: 18px;
	text-align: center;
	border-right: 1px solid #ababab;
}
.sheets .wide {
	width: 79px;
}
.sheets .on {
	height: 24px;
	margin: -1px 0 0 -1px;
	width: 67px;
	line-height: 24px;
	background: #fff;
	color: #217346;
	border-left: 1px solid #ababab;
	border-bottom: 2px solid #217346;
}
.sheets .last {
	width: 64px;
	border: 0;
}
.arrows {
	display: flex;
	width: 101px;
	height: 20px;
	margin-top: 3px;
	padding: 5px 0 5px 26px;
	gap: 24px;
	border-right: 1px solid #ababab;
}
.prev, .next {
	border: 5px solid transparent;
	border-left: 0;
	border-right-color: #bbb;
}
.next {
	border: 5px solid transparent;
	border-right: 0;
	border-left-color: #217346;
}
.dotdot {
	width: 20px;
	font-weight: bold;
	color: #217346;
	height: 22px;
}
.add {
	margin: 5px 6px 0 7px;
	height: 17px;
}
.hscroll {
	flex: 1;
	display: flex;
	margin: 6px 9px 6px 0;
	background: #e8e8e8;
}
.hscroll .prev, .hscroll .next {
	border: 1px solid #ababab;
	width: 15px;
	background: #fff;
}
.hscroll .prev:before, .hscroll .next:before {
	content: "";
	border: 4px solid transparent;
	border-left: 0;
	border-right-color: #666;
}
.hscroll .next:before {
	border: 4px solid transparent;
	border-right: 0;
	border-left-color: #666;
}
.thumb {
	flex: 1;
	margin-right: 28px;
	background: #fff;
	border: 1px solid #ababab;
}

/* status bar */
.status {
	display: flex;
	align-items: center;
	height: 22px;
	background: #217346;
	color: #fff;
	padding-left: 7px;
	line-height: 20px;
}
.macro {
	margin-left: 20px;
}
.views {
	display: flex;
	margin-left: auto;
	margin-right: 2px;
}
.views button {
	width: 38px;
	height: 21px;
}
.views .on {
	background: #0a6332;
}
.zm {
	width: 10px;
}
.status input {
	appearance: none;
	width: 100px;
	height: 12px;
	margin: 0 3px;
	background: linear-gradient(#fff, #fff) 0 5px / 100% 1px no-repeat;
}
.status input::-webkit-slider-thumb {
	appearance: none;
	width: 4px;
	height: 11px;
	background: #fff;
}
.pctv {
	margin-left: 14px;
	width: 32px;
}

/* taskbar */
.taskbar {
	display: flex;
	height: 40px;
	background: #1d1d1d;
	color: #fff;
}
.taskbar > button {
	width: 49px;
	position: relative;
}
.taskbar .start {
	width: 48px;
}
.taskbar .view {
	width: 50px;
	padding-right: 2px;
}
.find {
	width: 344px;
	display: flex;
	align-items: center;
	gap: 11px;
	padding-left: 11px;
	background: #f1f1f1;
	border: 1px solid #bbb;
	color: #222;
}
.find input {
	flex: 1;
	min-width: 0;
	font-size: 16px;
}
.find input::placeholder {
	color: #222;
	opacity: 1;
}
.run:after {
	content: "";
	position: absolute;
	left: 4px;
	right: 5px;
	bottom: 0;
	height: 2px;
	background: #76b9ed;
}
.now {
	background: #4a4a4a;
}
.now:after {
	left: 0;
	right: 0;
}
.tray {
	margin-left: auto;
	margin-right: 13px;
	display: flex;
	align-items: center;
	gap: 7px;
}
.ime {
	font-size: 15px;
	margin-right: 4px;
}
.clock {
	display: flex;
	flex-direction: column;
	align-items: center;
	line-height: 18px;
	margin-right: 11px;
}
```
